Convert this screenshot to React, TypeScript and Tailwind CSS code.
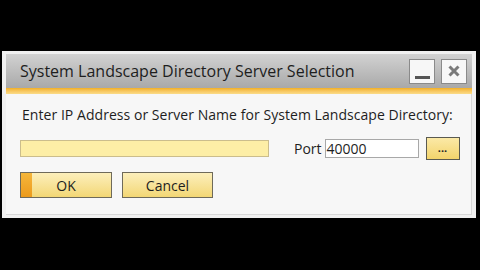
import React from "react";

export default function App() {
  const font = { fontFamily: '"Open Sans", "Noto Sans", sans-serif' };
  return (
    <div className="w-[480px] h-[270px] bg-black flex flex-col overflow-hidden" style={font}>
      <div className="h-[51px] shrink-0" />
      <div className="mx-[2px] w-[474px] h-[167px] bg-[#f4f4f4] border-t-[3px] border-x-[4px] border-b-[3px] border-[#f0f0f0] flex flex-col">
        <div className="h-[34px] shrink-0 bg-gradient-to-b from-[#d2d2d2] to-[#a9a9a9] flex items-center pl-[14px] pr-[5px]">
          <span className="text-[16px] text-[#1e1e1e] tracking-[0px] flex-1">
            System Landscape Directory Server Selection
          </span>
          <div className="flex gap-[6px]">
            <div className="w-[26px] h-[25px] bg-[#f7f7f7] border border-[#8a8a8a] flex items-end justify-center pb-[4px]">
              <div className="w-[15px] h-[3px] bg-[#555]" />
            </div>
            <div className="w-[26px] h-[25px] bg-[#f7f7f7] border border-[#8a8a8a] flex items-center justify-center">
              <svg width="14" height="14" viewBox="0 0 14 14">
                <path d="M2.5 2.5 L11.5 11.5 M11.5 2.5 L2.5 11.5" stroke="#7a7a7a" strokeWidth="3" />
              </svg>
            </div>
          </div>
        </div>
        <div className="h-[6px] shrink-0 bg-gradient-to-b from-[#f2b021] to-[#fbdc88]" />
        <div className="flex-1 bg-[#f7f7f7] border-r border-b border-[#d8d8d8] flex flex-col pl-[14px]">
          <div className="mt-[11px] text-[14px] text-[#1e1e1e] h-[19px] leading-[19px] pl-[2px] tracking-[0.05px]">
            Enter IP Address or Server Name for System Landscape Directory:
          </div>
          <div className="mt-[13px] flex items-center h-[23px]">
            <div className="w-[249px] h-[17px] bg-[#fdeea6] border border-[#cbbd8c]" />
            <span className="ml-[25px] text-[14px] text-[#1e1e1e]">Port</span>
            <div className="ml-[3px] w-[94px] h-[19px] bg-white border border-[#a8a8a8] flex items-center pl-[1px] text-[14px] text-[#1e1e1e]">
              40000
            </div>
            <div className="ml-[7px] w-[34px] h-[23px] bg-gradient-to-b from-[#fbe9a6] to-[#f3d46b] border border-[#5a5a50] flex items-center justify-center text-[11px] leading-none text-[#222] font-bold pb-[2px]">
              ...
            </div>
          </div>
          <div className="mt-[12px] flex gap-[10px]">
            <div className="w-[92px] h-[26px] border border-[#6e6a5a] bg-gradient-to-b from-[#fcefbb] to-[#f3d774] flex">
              <div className="w-[11px] h-full bg-gradient-to-b from-[#f5b63a] to-[#ec9a1a]" />
              <div className="flex-1 flex items-center justify-center text-[14px] text-[#1e1e1e] pr-[11px]">OK</div>
            </div>
            <div className="w-[91px] h-[26px] border border-[#6e6a5a] bg-gradient-to-b from-[#fcefbb] to-[#f3d774] flex items-center justify-center text-[14px] text-[#1e1e1e]">
              Cancel
            </div>
          </div>
        </div>
      </div>
    </div>
  );
}
